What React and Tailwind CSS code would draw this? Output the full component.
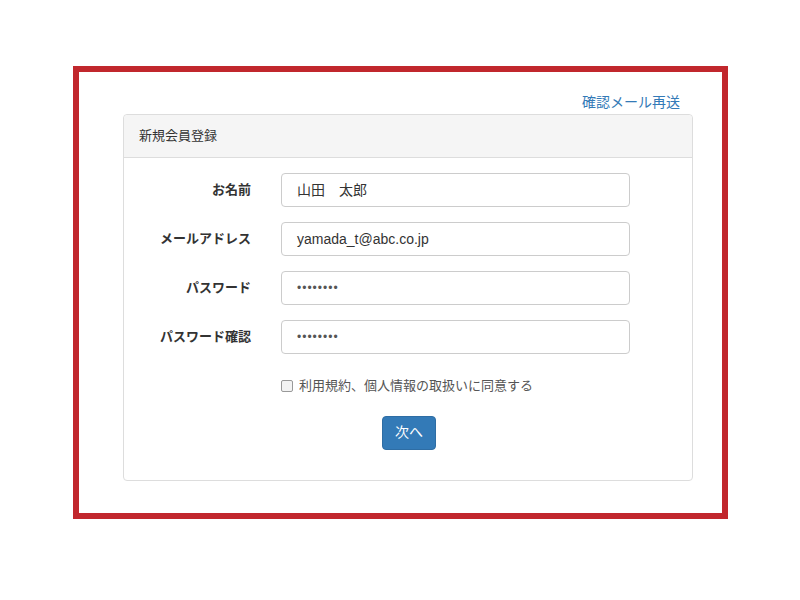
import React from "react";

const fields = [
  { label: "お名前", value: "山田　太郎" },
  { label: "メールアドレス", value: "yamada_t@abc.co.jp" },
  { label: "パスワード", value: "••••••••", pw: true },
  { label: "パスワード確認", value: "••••••••", pw: true },
];

export default function App() {
  return (
    <div
      className="w-[800px] h-[600px] bg-white pt-[66px] pl-[73px]"
      style={{ fontFamily: '"Liberation Sans", "Noto Sans CJK JP", sans-serif' }}
    >
      <div className="w-[655px] h-[453px] border-[6px] border-[#c1272d] relative">
        <div className="h-[42px] flex items-end justify-end pr-[42px] pb-[5px]">
          <span className="text-[14px] text-[#337ab7] leading-none">確認メール再送</span>
        </div>
        <div className="ml-[44px] w-[570px] border border-[#dddddd] rounded-[4px] mt-[0px]">
          <div className="h-[43px] bg-[#f5f5f5] border-b border-[#dddddd] rounded-t-[4px] flex items-center px-[15px] text-[13px] text-[#333]">
            新規会員登録
          </div>
          <div className="pt-[15px] pb-[30px] flex flex-col">
            <div className="flex flex-col gap-[15px]">
              {fields.map((f) => (
                <div key={f.label} className="flex items-center">
                  <div className="w-[127px] text-right text-[13px] font-bold text-[#333]">{f.label}</div>
                  <div
                    className={
                      "ml-[30px] w-[349px] h-[34px] border border-[#cccccc] rounded-[4px] flex items-center px-[15px] text-[#333] " +
                      (f.pw ? "text-[12px] tracking-[1px] text-[#555]" : "text-[14px]")
                    }
                  >
                    {f.value}
                  </div>
                </div>
              ))}
            </div>
            <div className="ml-[157px] mt-[22px] flex items-center gap-[6px] text-[13px] text-[#555]">
              <span className="w-[12px] h-[12px] border border-[#999] rounded-[2px] bg-[#f3f3f3]"></span>
              利用規約、個人情報の取扱いに同意する
            </div>
            <div className="flex justify-center mt-[20px] ml-[2px]">
              <div className="w-[54px] h-[34px] bg-[#337ab7] border border-[#2e6da4] rounded-[4px] text-white text-[14px] flex items-center justify-center">
                次へ
              </div>
            </div>
          </div>
        </div>
      </div>
    </div>
  );
}
